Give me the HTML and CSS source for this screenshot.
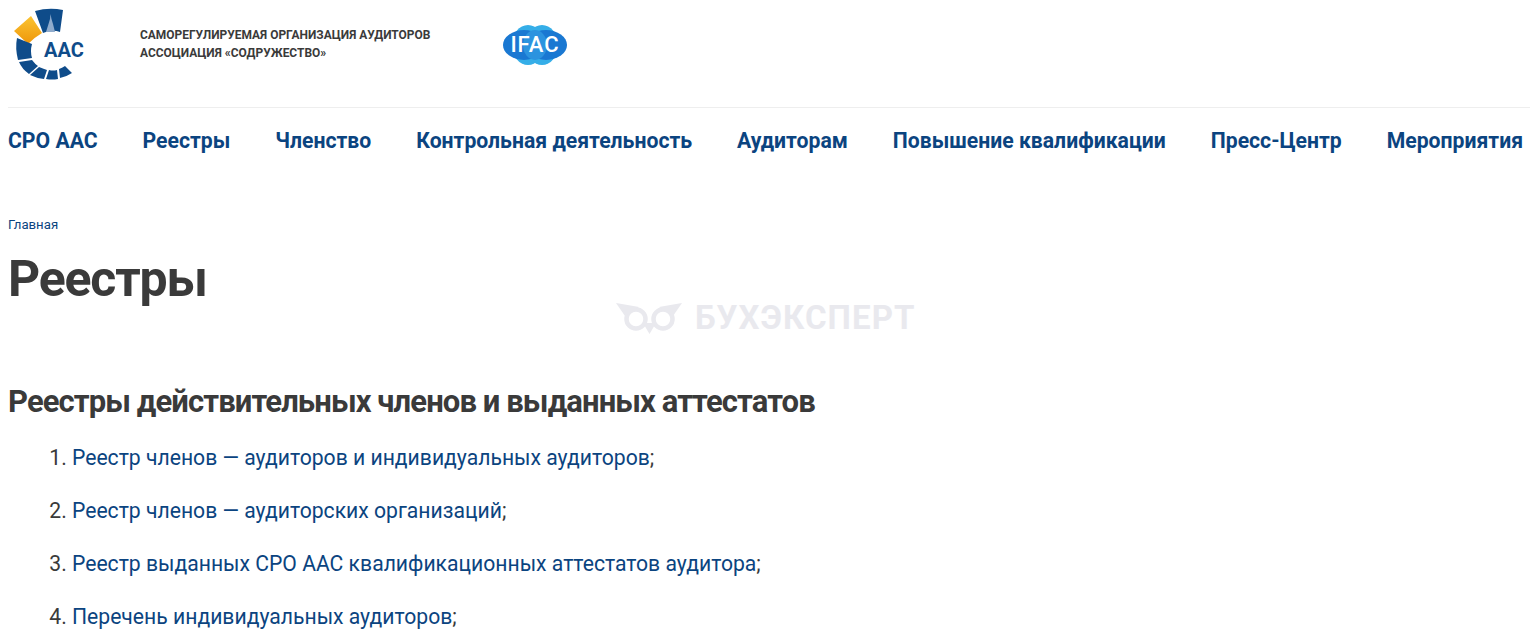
FILE: index.html
```html
<!DOCTYPE html>
<html lang="ru">
<head>
  <meta charset="UTF-8" />
  <meta name="viewport" content="width=device-width, initial-scale=1.0"/>
  <title>Реестры</title>
  <link rel="stylesheet" href="styles.css">
</head>
<body>

<header class="top">
  <svg class="logo" width="100" height="90" viewBox="0 0 100 90">
    <defs>
      <linearGradient id="gold" x1="0" y1="0" x2="0" y2="1">
        <stop offset="0" stop-color="#fbc432"/>
        <stop offset="1" stop-color="#ee960a"/>
      </linearGradient>
    </defs>
    <path class="seg" d="M35 11 Q49 7 63 10 L60 32 Q52 29 43 33 Z"/>
    <path class="spire" d="M50.5 14 L51.5 19 L53 24 L55 32 L46 32 L48.5 24 L50 19 Z"/>
    <path fill="url(#gold)" d="M14 31 L31 16 L42 33 Q35 37 28 44 Z"/>
    <path class="seg" d="M17 38 L32 44 Q30 51 32 58 L18 60 Q15 48 17 38 Z"/>
    <path class="seg" d="M19 62 L32 60 Q35 64 38 66 L29 74 Q22 69 19 62 Z"/>
    <path class="seg" d="M30 75 L39 67 Q44 69 47 70 L44 79 Q36 78 30 75 Z"/>
    <path class="seg" d="M46 79 L49 70 Q53 71 57 70 L58 79 Q52 80 46 79 Z"/>
    <path class="seg" d="M60 78 L59 69 Q62 68 65 66 L72 73 Q66 77 60 78 Z"/>
    <text class="logo-text" x="44" y="57">ААС</text>
  </svg>
  <div class="org">
    <div>САМОРЕГУЛИРУЕМАЯ ОРГАНИЗАЦИЯ АУДИТОРОВ</div>
    <div>АССОЦИАЦИЯ «СОДРУЖЕСТВО»</div>
  </div>
  <svg class="ifac" width="64" height="40" viewBox="0 0 64 40">
    <ellipse cx="25" cy="20" rx="16" ry="20" fill="#35aee8"/>
    <ellipse cx="39" cy="20" rx="16" ry="20" fill="#35aee8"/>
    <ellipse cx="21" cy="20" rx="21" ry="15" fill="#1a78d2"/>
    <ellipse cx="43" cy="20" rx="21" ry="15" fill="#1a78d2"/>
    <ellipse cx="32" cy="20" rx="12" ry="15" fill="#2c93df"/>
    <text class="ifac-text" x="32" y="27">IFAC</text>
  </svg>
</header>

<nav class="menu">
  <a href="#">СРО ААС</a>
  <a href="#">Реестры</a>
  <a href="#">Членство</a>
  <a href="#">Контрольная деятельность</a>
  <a href="#">Аудиторам</a>
  <a href="#">Повышение квалификации</a>
  <a href="#">Пресс-Центр</a>
  <a href="#">Мероприятия</a>
</nav>

<main>
  <a class="crumb" href="#">Главная</a>
  <h1>Реестры</h1>
  <h2>Реестры действительных членов и выданных аттестатов</h2>
  <ol class="docs">
    <li><a href="#">Реестр членов — аудиторов и индивидуальных аудиторов</a>;</li>
    <li><a href="#">Реестр членов — аудиторских организаций</a>;</li>
    <li><a href="#">Реестр выданных СРО ААС квалификационных аттестатов аудитора</a>;</li>
    <li><a href="#">Перечень индивидуальных аудиторов</a>;</li>
  </ol>
</main>

<div class="mark">
  <svg width="68" height="34" viewBox="0 0 68 34">
    <circle class="owl-eye" cx="21" cy="18" r="9.500"/>
    <circle class="owl-eye" cx="48" cy="18" r="9.500"/>
    <path class="owl" d="M1 2 L24 6 L10 15 Z M67 2 L44 6 L58 15 Z M28 22 L41 22 L34.500 33 Z"/>
  </svg>
  <span>БУХЭКСПЕРТ</span>
</div>

</body>
</html>
```

FILE: styles.css
```css
body {
  margin: 0; padding-left: 8px; font-family: Roboto, sans-serif; background: white; color: #3a3a3a;
  overflow-x: hidden;
}
a { color: #0b4480; text-decoration: none; }

.top {
  display: flex; align-items: flex-start;
  height: 107px; border-bottom: 1px solid #eeeeee;
}
.logo { flex: none; margin-left: -8px; }
.seg { fill: #0f4c8a; }
.spire { fill: #8fabcc; }
.logo-text { font: bold 20px Roboto, sans-serif; fill: #0f4c8a; }
.org {
  margin: 26px 0 0 40px; width: 363px;
  font-size: 11.95px; font-weight: 700; line-height: 18px; color: #3a3a3a;
}
.ifac { flex: none; margin-top: 25px; }
.ifac-text { font: 500 22px Roboto, sans-serif; fill: white; text-anchor: middle; letter-spacing: 1px; }

.menu {
  display: flex; justify-content: space-between;
  width: 1515px; padding-top: 20px;
}
.menu a { font-size: 21.2px; font-weight: 700; line-height: 26px; }

.crumb { display: block; margin-top: 63px; font-size: 13.2px; line-height: 16px; }
h1 { margin: 16px 0 0; font-size: 50px; font-weight: 700; line-height: 60px; letter-spacing: -1.2px; }
h2 { margin: 74px 0 0; font-size: 31px; font-weight: 700; line-height: 38px; letter-spacing: -0.9px; }

.docs { margin: 24px 0 0; padding-left: 64px; font-size: 21.15px; line-height: 26px; color: #3a3a3a; }
.docs li { margin-bottom: 27px; }

.mark {
  position: absolute; left: 615px; top: 298px;
  display: flex; align-items: center; gap: 12px;
  font-size: 33px; font-weight: 700; letter-spacing: 1.1px; color: #e9e9ee;
}
.owl { fill: #e9e9ee; }
.owl-eye { fill: none; stroke: #e9e9ee; stroke-width: 4.5; }
```
